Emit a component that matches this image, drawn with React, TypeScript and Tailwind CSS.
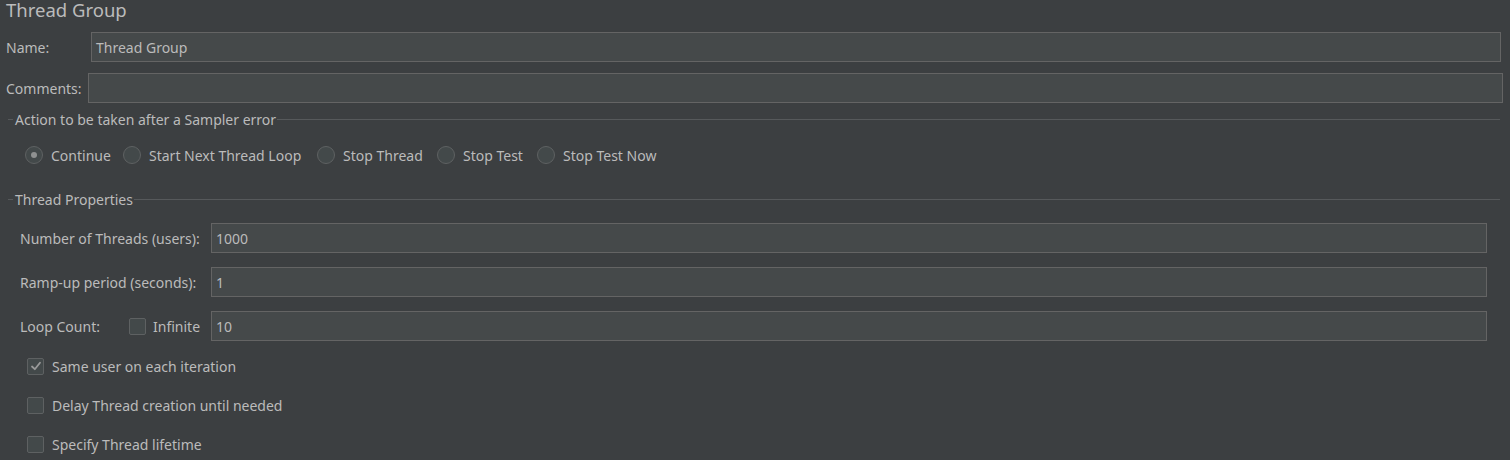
import React from "react";

const FONT = { fontFamily: '"Noto Sans", "Open Sans", sans-serif' };

function Input({ value, className = "" }: { value?: string; className?: string }) {
  return (
    <div
      className={
        "flex h-[30px] items-center border border-[#646464] bg-[#45494a] pl-[4px] text-[14px] text-[#bbbbbb] " +
        className
      }
    >
      {value}
    </div>
  );
}

function Radio({ checked, label, w }: { checked?: boolean; label: string; w: string }) {
  return (
    <div className={"flex items-center " + w}>
      <div className="flex h-[18px] w-[18px] items-center justify-center rounded-full border border-[#5e6162] bg-[#43494a]">
        {checked && <div className="h-[6px] w-[6px] rounded-full bg-[#8f9191]" />}
      </div>
      <span className="ml-[8px] text-[14px] text-[#bbbbbb]">{label}</span>
    </div>
  );
}

function Check({ checked }: { checked?: boolean }) {
  return (
    <div className="flex h-[17px] w-[17px] items-center justify-center rounded-[2px] border border-[#5e6162] bg-[#43494a]">
      {checked && (
        <svg width="12" height="12" viewBox="0 0 12 12">
          <path d="M2 6.5 L4.8 9.2 L10 2.8" fill="none" stroke="#9a9a9a" strokeWidth="1.8" strokeLinecap="round" strokeLinejoin="round" />
        </svg>
      )}
    </div>
  );
}

function SectionHeader({ title }: { title: string }) {
  return (
    <div className="flex h-[20px] items-center pl-[8px] pr-[10px]">
      <div className="h-px w-[5px] bg-[#56595b]" />
      <span className="ml-[2px] mr-[1px] text-[14px] text-[#bbbbbb]">{title}</span>
      <div className="h-px flex-1 bg-[#56595b]" />
    </div>
  );
}

export default function App() {
  return (
    <div className="h-[460px] w-full overflow-hidden bg-[#3c3f41] text-[#bbbbbb]" style={FONT}>
      <div className="flex h-[22px] items-start pl-[6px]">
        <span className="text-[18.5px] leading-[20px]">Thread Group</span>
      </div>

      <div className="mt-[10px] flex items-center pl-[6px] pr-[9px]">
        <span className="w-[85px] text-[14px]">Name:</span>
        <Input value="Thread Group" className="flex-1" />
      </div>

      <div className="mt-[11px] flex items-center pl-[6px] pr-[7px]">
        <span className="w-[82px] text-[14px]">Comments:</span>
        <Input className="flex-1 h-[29px]" />
      </div>

      <div className="mt-[6px]">
        <SectionHeader title="Action to be taken after a Sampler error" />
      </div>

      <div className="mt-[14px] flex h-[24px] items-center pl-[25px]">
        <Radio checked label="Continue" w="w-[98px]" />
        <Radio label="Start Next Thread Loop" w="w-[194px]" />
        <Radio label="Stop Thread" w="w-[120px]" />
        <Radio label="Stop Test" w="w-[100px]" />
        <Radio label="Stop Test Now" w="w-[160px]" />
      </div>

      <div className="mt-[22px]">
        <SectionHeader title="Thread Properties" />
      </div>

      <div className="mt-[14px] flex flex-col gap-[14px] pl-[20px] pr-[23px]">
        <div className="flex items-center">
          <span className="w-[191px] text-[14px]">Number of Threads (users):</span>
          <Input value="1000" className="flex-1" />
        </div>
        <div className="flex items-center">
          <span className="w-[191px] text-[14px]">Ramp-up period (seconds):</span>
          <Input value="1" className="flex-1" />
        </div>
        <div className="flex items-center">
          <span className="w-[109px] text-[14px]">Loop Count:</span>
          <Check />
          <span className="ml-[7px] w-[58px] text-[14px]">Infinite</span>
          <Input value="10" className="flex-1" />
        </div>
      </div>

      <div className="mt-[13px] flex flex-col gap-[15px] pl-[27px]">
        <div className="flex h-[24px] items-center">
          <Check checked />
          <span className="ml-[8px] text-[14px]">Same user on each iteration</span>
        </div>
        <div className="flex h-[24px] items-center">
          <Check />
          <span className="ml-[8px] text-[14px]">Delay Thread creation until needed</span>
        </div>
        <div className="flex h-[24px] items-center">
          <Check />
          <span className="ml-[8px] text-[14px]">Specify Thread lifetime</span>
        </div>
      </div>
    </div>
  );
}
